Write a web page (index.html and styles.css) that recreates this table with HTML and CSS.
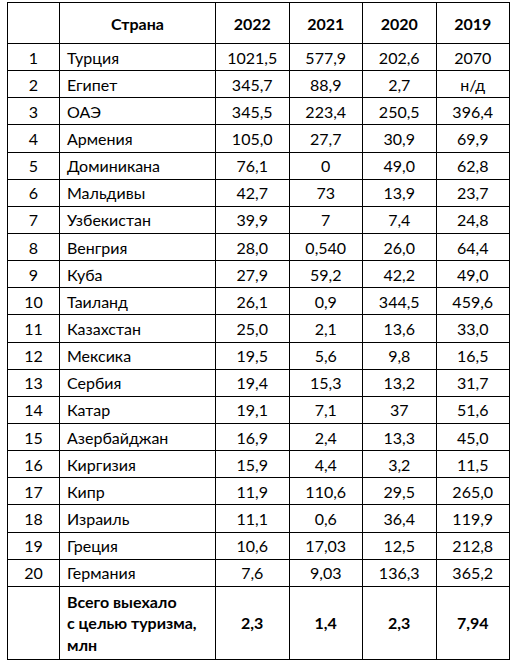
FILE: index.html
```html
<!DOCTYPE html>
<html lang="ru">
<head>
<meta charset="utf-8">
<title>Туризм</title>
<link rel="stylesheet" href="styles.css">
</head>
<body>
<table class="tbl">
  <colgroup>
    <col class="c-num"><col class="c-country"><col class="c-year"><col class="c-year"><col class="c-year"><col class="c-year">
  </colgroup>
  <thead>
    <tr class="head"><th></th><th>Страна</th><th>2022</th><th>2021</th><th>2020</th><th>2019</th></tr>
  </thead>
  <tbody>
    <tr><td>1</td><td class="name">Турция</td><td>1021,5</td><td>577,9</td><td>202,6</td><td>2070</td></tr>
    <tr><td>2</td><td class="name">Египет</td><td>345,7</td><td>88,9</td><td>2,7</td><td>н/д</td></tr>
    <tr><td>3</td><td class="name">ОАЭ</td><td>345,5</td><td>223,4</td><td>250,5</td><td>396,4</td></tr>
    <tr><td>4</td><td class="name">Армения</td><td>105,0</td><td>27,7</td><td>30,9</td><td>69,9</td></tr>
    <tr><td>5</td><td class="name">Доминикана</td><td>76,1</td><td>0</td><td>49,0</td><td>62,8</td></tr>
    <tr><td>6</td><td class="name">Мальдивы</td><td>42,7</td><td>73</td><td>13,9</td><td>23,7</td></tr>
    <tr><td>7</td><td class="name">Узбекистан</td><td>39,9</td><td>7</td><td>7,4</td><td>24,8</td></tr>
    <tr><td>8</td><td class="name">Венгрия</td><td>28,0</td><td>0,540</td><td>26,0</td><td>64,4</td></tr>
    <tr><td>9</td><td class="name">Куба</td><td>27,9</td><td>59,2</td><td>42,2</td><td>49,0</td></tr>
    <tr><td>10</td><td class="name">Таиланд</td><td>26,1</td><td>0,9</td><td>344,5</td><td>459,6</td></tr>
    <tr><td>11</td><td class="name">Казахстан</td><td>25,0</td><td>2,1</td><td>13,6</td><td>33,0</td></tr>
    <tr><td>12</td><td class="name">Мексика</td><td>19,5</td><td>5,6</td><td>9,8</td><td>16,5</td></tr>
    <tr><td>13</td><td class="name">Сербия</td><td>19,4</td><td>15,3</td><td>13,2</td><td>31,7</td></tr>
    <tr><td>14</td><td class="name">Катар</td><td>19,1</td><td>7,1</td><td>37</td><td>51,6</td></tr>
    <tr><td>15</td><td class="name">Азербайджан</td><td>16,9</td><td>2,4</td><td>13,3</td><td>45,0</td></tr>
    <tr><td>16</td><td class="name">Киргизия</td><td>15,9</td><td>4,4</td><td>3,2</td><td>11,5</td></tr>
    <tr><td>17</td><td class="name">Кипр</td><td>11,9</td><td>110,6</td><td>29,5</td><td>265,0</td></tr>
    <tr><td>18</td><td class="name">Израиль</td><td>11,1</td><td>0,6</td><td>36,4</td><td>119,9</td></tr>
    <tr><td>19</td><td class="name">Греция</td><td>10,6</td><td>17,03</td><td>12,5</td><td>212,8</td></tr>
    <tr><td>20</td><td class="name">Германия</td><td>7,6</td><td>9,03</td><td>136,3</td><td>365,2</td></tr>
    <tr class="total"><td></td><td class="name">Всего выехало<br>с целью туризма,<br>млн</td><td>2,3</td><td>1,4</td><td>2,3</td><td>7,94</td></tr>
  </tbody>
</table>
</body>
</html>
```

FILE: styles.css
```css
html, body {
  margin: 0;
  padding: 0;
  background: #ffffff;
}

.tbl {
  margin: 2px 0 0 7px;
  border-collapse: collapse;
  table-layout: fixed;
  width: 502px;
  font-family: Lato, "Open Sans", "Liberation Sans", sans-serif;
  font-size: 16px;
  color: #000000;
}

.c-num { width: 52px; }
.c-country { width: 156px; }
.c-year { width: 73.5px; }

.tbl th,
.tbl td {
  border: 1px solid #000000;
  padding: 0;
  text-align: center;
  vertical-align: middle;
  font-weight: normal;
}

.tbl .head th {
  height: 40px;
  font-weight: bold;
}

.tbl tbody tr td {
  height: 26.15px;
}

.tbl td.name {
  text-align: left;
  padding-left: 7px;
}

.tbl .total td {
  height: 72px;
  font-weight: bold;
  line-height: 21.5px;
}
```
